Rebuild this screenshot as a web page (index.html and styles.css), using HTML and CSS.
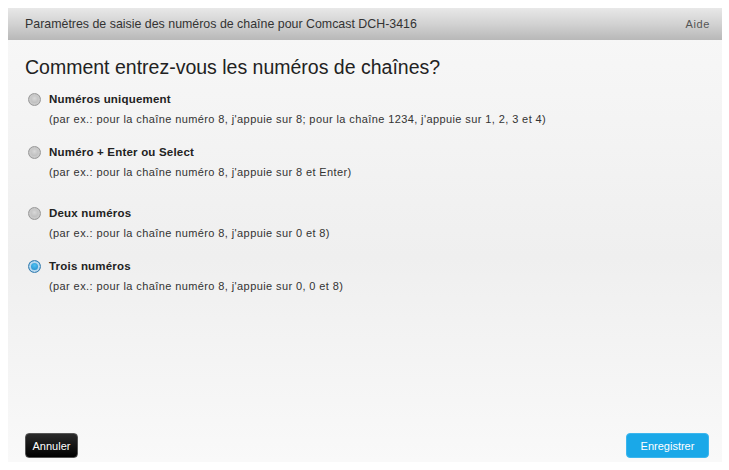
FILE: index.html
```html
<!DOCTYPE html>
<html lang="fr">
<head>
    <meta charset="UTF-8">
    <meta name="viewport" content="width=device-width, initial-scale=1.0">
    <title>Paramètres de saisie</title>
    <link rel="stylesheet" href="styles.css">
</head>
<body>

    <div class="panel">
        <header class="titlebar">
            <span>Paramètres de saisie des numéros de chaîne pour Comcast DCH-3416</span>
            <a class="help" href="#">Aide</a>
        </header>

        <main class="content">
            <h1>Comment entrez-vous les numéros de chaînes?</h1>

            <div class="options">
                <label class="option">
                    <span class="radio"></span>
                    <span class="text">
                        <b>Numéros uniquement</b>
                        <small>(par ex.: pour la chaîne numéro 8, j'appuie sur 8; pour la chaîne 1234, j'appuie sur 1, 2, 3 et 4)</small>
                    </span>
                </label>
                <label class="option">
                    <span class="radio"></span>
                    <span class="text">
                        <b>Numéro + Enter ou Select</b>
                        <small>(par ex.: pour la chaîne numéro 8, j'appuie sur 8 et Enter)</small>
                    </span>
                </label>
                <label class="option">
                    <span class="radio"></span>
                    <span class="text">
                        <b>Deux numéros</b>
                        <small>(par ex.: pour la chaîne numéro 8, j'appuie sur 0 et 8)</small>
                    </span>
                </label>
                <label class="option">
                    <span class="radio checked"></span>
                    <span class="text">
                        <b>Trois numéros</b>
                        <small>(par ex.: pour la chaîne numéro 8, j'appuie sur 0, 0 et 8)</small>
                    </span>
                </label>
            </div>
        </main>

        <footer class="actions">
            <button class="btn cancel">Annuler</button>
            <button class="btn save">Enregistrer</button>
        </footer>
    </div>

</body>
</html>
```

FILE: styles.css
```css
* {
    box-sizing: border-box;
    margin: 0;
    padding: 0;
    font-family: "Liberation Sans", Arial, sans-serif;
}

body {
    background: #fff;
    padding: 8px 7px 8px 8px;
    height: 470px;
}

.panel {
    height: 454px;
    display: flex;
    flex-direction: column;
    background: linear-gradient(#f8f8f8, #efefef 55%, #f9f9f9);
}

/* --- barre de titre --- */
.titlebar {
    height: 32px;
    display: flex;
    justify-content: space-between;
    align-items: center;
    padding: 0 12px 0 17px;
    background: linear-gradient(#e8e8e8, #d2d2d2 50%, #b8b8b8);
    color: #333;
    font-size: 12.4px;
}

.help {
    color: #555;
    text-decoration: none;
    font-size: 11px;
    letter-spacing: 0.6px;
}

/* --- contenu --- */
.content {
    flex: 1;
    padding: 16px 17px 0;
}

h1 {
    font-weight: normal;
    font-size: 19.5px;
    color: #222;
    margin-bottom: 14px;
}

.options {
    display: flex;
    flex-direction: column;
}

.option {
    display: flex;
    gap: 8px;
    align-items: flex-start;
    margin-bottom: 21px;
}

.option:nth-child(2) {
    margin-bottom: 29px;
}

.radio {
    width: 13px;
    height: 13px;
    margin: 0 0 0 3px;
    border-radius: 50%;
    background: radial-gradient(circle at 50% 40%, #d8d8d8, #a9a9a9);
    border: 1px solid #999;
    box-shadow: inset 0 0 0 2px #c9c9c9;
}

.radio.checked {
    background: radial-gradient(circle at 50% 40%, #4ec0f0, #0a6fb8);
    border-color: #3a7fb0;
    box-shadow: inset 0 0 0 2px #b8d8ee;
}

.text {
    display: flex;
    flex-direction: column;
    gap: 8px;
}

.text b {
    font-size: 11.5px;
    letter-spacing: 0.2px;
    color: #222;
}

.text small {
    font-size: 11px;
    letter-spacing: 0.4px;
    color: #333;
}

/* --- boutons --- */
.actions {
    display: flex;
    justify-content: space-between;
    align-items: flex-end;
    padding: 0 13px 4px 17px;
    height: 54px;
}

.btn {
    height: 25px;
    border-radius: 4px;
    font-size: 11px;
    cursor: pointer;
    padding: 0;
}

.cancel {
    width: 53px;
    background: linear-gradient(#2a2a2a, #000);
    border: 1px solid #555;
    color: #fff;
}

.save {
    width: 83px;
    background: #1aa8e8;
    border: 1px solid #3cb6ee;
    color: #fff;
}
```
